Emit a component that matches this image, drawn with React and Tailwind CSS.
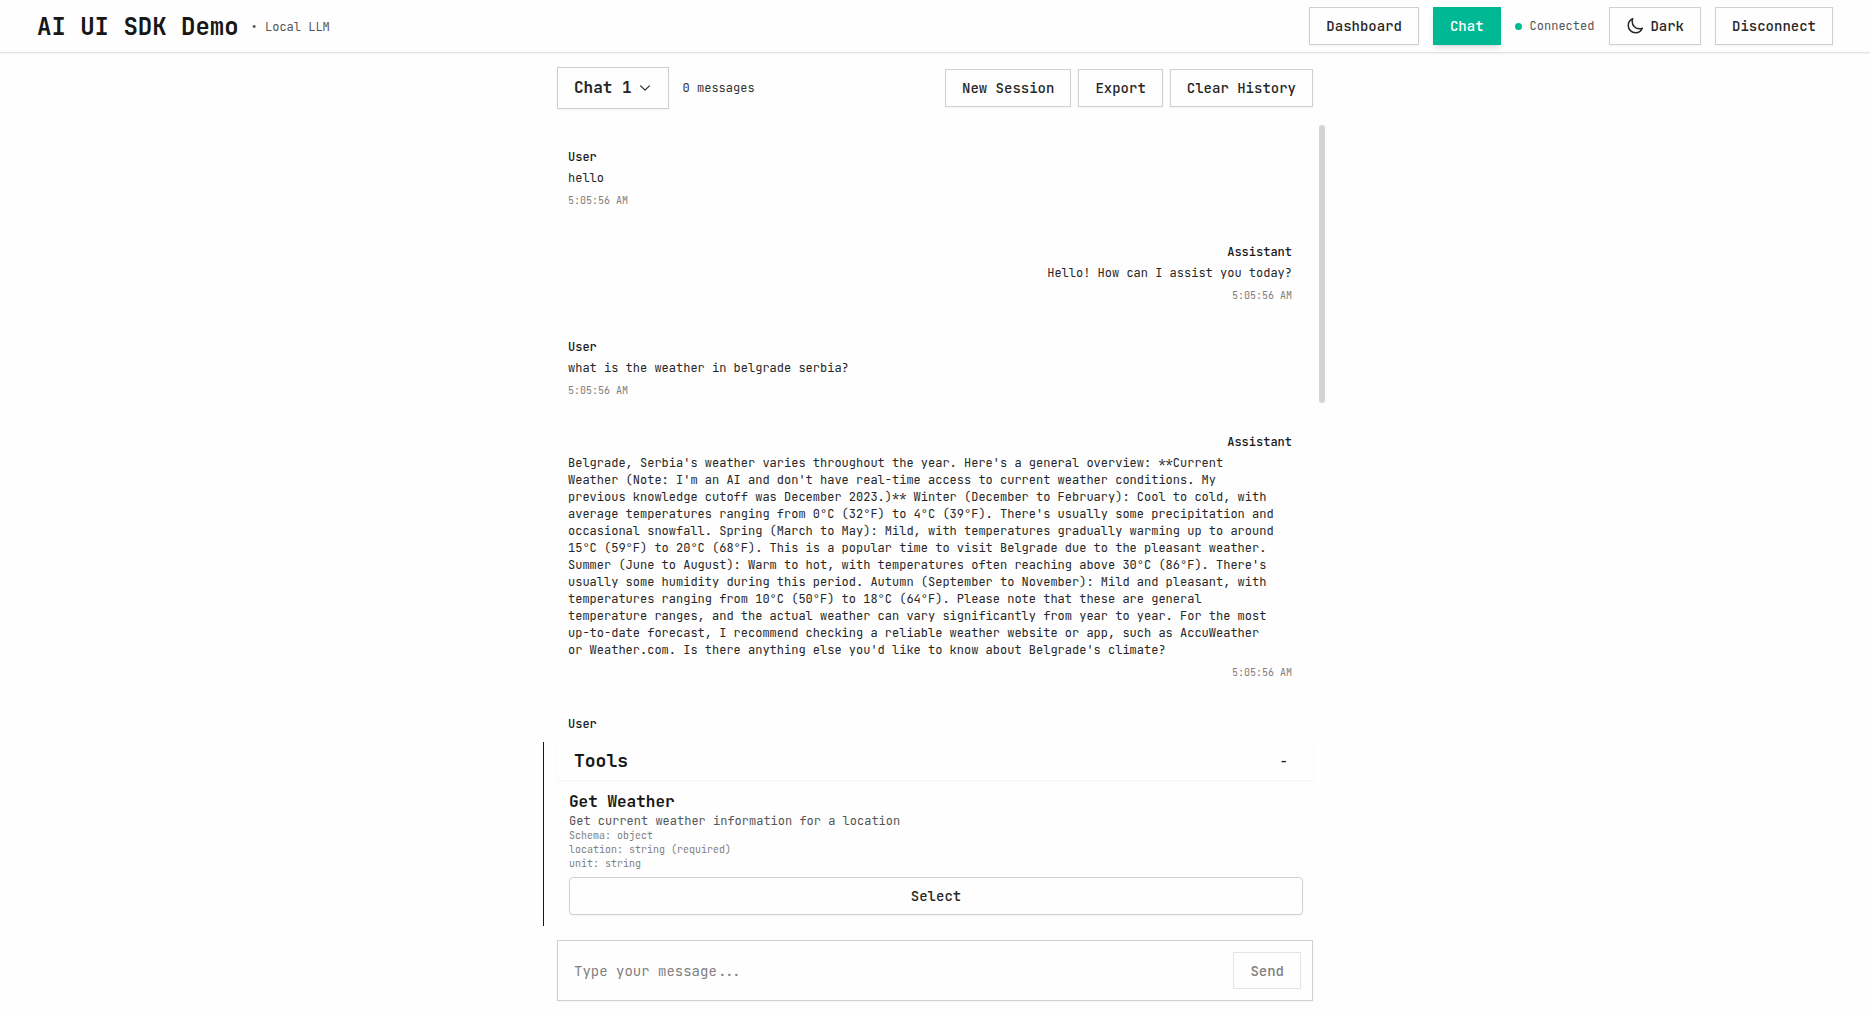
import { useState } from "react";

const BTN =
  "flex h-[38px] items-center justify-center border border-[#d0d0d0] bg-[#fefefe] px-4 text-sm font-medium text-[#262626] shadow-xs";

const MESSAGES = [
  { role: "User", text: "hello", time: "5:05:56 AM" },
  { role: "Assistant", text: "Hello! How can I assist you today?", time: "5:05:56 AM" },
  { role: "User", text: "what is the weather in belgrade serbia?", time: "5:05:56 AM" },
  {
    role: "Assistant",
    long: true,
    time: "5:05:56 AM",
    text: "Belgrade, Serbia's weather varies throughout the year. Here's a general overview: **Current Weather (Note: I'm an AI and don't have real-time access to current weather conditions. My previous knowledge cutoff was December 2023.)** Winter (December to February): Cool to cold, with average temperatures ranging from 0°C (32°F) to 4°C (39°F). There's usually some precipitation and occasional snowfall. Spring (March to May): Mild, with temperatures gradually warming up to around 15°C (59°F) to 20°C (68°F). This is a popular time to visit Belgrade due to the pleasant weather. Summer (June to August): Warm to hot, with temperatures often reaching above 30°C (86°F). There's usually some humidity during this period. Autumn (September to November): Mild and pleasant, with temperatures ranging from 10°C (50°F) to 18°C (64°F). Please note that these are general temperature ranges, and the actual weather can vary significantly from year to year. For the most up-to-date forecast, I recommend checking a reliable weather website or app, such as AccuWeather or Weather.com. Is there anything else you'd like to know about Belgrade's climate?",
  },
  { role: "User" },
];

function MoonIcon() {
  return (
    <svg
      className="size-[18px]"
      viewBox="0 0 24 24"
      fill="none"
      stroke="currentColor"
      strokeWidth="2"
      strokeLinecap="round"
      strokeLinejoin="round"
      aria-hidden="true"
    >
      <path d="M21.752 15.002A9.72 9.72 0 0 1 18 15.75c-5.385 0-9.75-4.365-9.75-9.75 0-1.33.266-2.597.748-3.752A9.753 9.753 0 0 0 3 11.25C3 16.635 7.365 21 12.75 21a9.753 9.753 0 0 0 9.002-5.998Z" />
    </svg>
  );
}

function ChevronIcon() {
  return (
    <svg
      className="size-[14px]"
      viewBox="0 0 24 24"
      fill="none"
      stroke="currentColor"
      strokeWidth="2"
      strokeLinecap="round"
      strokeLinejoin="round"
      aria-hidden="true"
    >
      <path d="m19.5 8.25-7.5 7.5-7.5-7.5" />
    </svg>
  );
}

function Header() {
  return (
    <header className="flex shrink-0 items-center justify-between border-b border-[#e2e2e2] px-[37px] py-[7px] shadow-xs">
      <div className="flex items-center gap-3 pt-px">
        <h1 className="text-2xl font-bold text-[#171717]">AI UI SDK Demo</h1>
        <span className="text-xs text-[#555]">• Local LLM</span>
      </div>
      <nav className="flex items-center gap-3.5">
        <button className={BTN}>Dashboard</button>
        <button className="flex h-[38px] items-center bg-[#00b894] px-[17px] text-sm font-medium text-white shadow-md">
          Chat
        </button>
        <div className="flex items-center gap-2 pr-px text-xs text-[#555]">
          <span className="size-[7px] rounded-full bg-[#00b894]" />
          Connected
        </div>
        <button className={`${BTN} gap-1.5`}>
          <MoonIcon />
          Dark
        </button>
        <button className={BTN}>Disconnect</button>
      </nav>
    </header>
  );
}

function Message({ role, text, time, long }) {
  const assistant = role === "Assistant";
  return (
    <article className={`flex flex-col pb-9 text-[#262626] ${assistant ? "items-end" : "items-start"}`}>
      <h3 className="text-xs/[17px] font-medium text-[#171717]">{role}</h3>
      {text && <p className={`mt-1 text-xs/[17px] ${long ? "w-full pr-4" : ""}`}>{text}</p>}
      {time && <time className="mt-[7px] text-[10px]/[14px] text-[#808080]">{time}</time>}
    </article>
  );
}

function Tools() {
  const [open, setOpen] = useState(true);
  return (
    <section className="-ml-3.5 shrink-0 border-l border-[#171717] pl-[13px]">
      <div className="flex h-[38px] items-center justify-between px-[17px] shadow-xs">
        <h2 className="text-lg font-bold text-[#171717]">Tools</h2>
        <button className="px-2 text-sm font-medium text-[#262626]" aria-expanded={open} onClick={() => setOpen(!open)}>
          {open ? "-" : "+"}
        </button>
      </div>
      {open && (
        <div className="pt-[11px] pr-2.5 pb-[11px] pl-3">
          <h3 className="text-base/[22px] font-bold text-[#171717]">Get Weather</h3>
          <p className="text-xs/[16px] text-[#555]">Get current weather information for a location</p>
          <div className="text-[10px]/[14px] text-[#808080]">
            <p>Schema: object</p>
            <p>location: string (required)</p>
            <p>unit: string</p>
          </div>
          <button className={`${BTN} mt-1.5 w-full rounded-sm`}>Select</button>
        </div>
      )}
    </section>
  );
}

export default function App() {
  const [draft, setDraft] = useState("");
  return (
    <div className="flex h-screen flex-col bg-[#fefefe] font-['JetBrains_Mono','DejaVu_Sans_Mono',monospace]">
      <Header />
      <main className="mx-auto flex min-h-0 w-full max-w-[756px] flex-1 flex-col py-3.5">
        <div className="flex shrink-0 items-center justify-between">
          <div className="flex items-center gap-3.5">
            <button className="flex h-[42px] items-center gap-1.5 border border-[#d0d0d0] px-4 text-base font-bold text-[#262626] shadow-xs">
              Chat 1
              <ChevronIcon />
            </button>
            <span className="text-xs text-[#333]">0 messages</span>
          </div>
          <div className="flex gap-[7px]">
            <button className={BTN}>New Session</button>
            <button className={BTN}>Export</button>
            <button className={BTN}>Clear History</button>
          </div>
        </div>

        <div className="mt-4 -mr-3 flex min-h-0 flex-1 justify-between">
          <div className="min-w-0 flex-1 overflow-hidden pt-6 pr-[27px] pl-[11px]">
            {MESSAGES.map((m, i) => (
              <Message key={i} {...m} />
            ))}
          </div>
          <div className="h-[278px] w-1.5 shrink-0 rounded-full bg-[#d4d4d4]" />
        </div>

        <Tools />

        <form
          className="mt-3.5 flex shrink-0 items-center border border-[#d0d0d0] py-[11px] pr-[11px] pl-4 shadow-xs"
          onSubmit={(e) => e.preventDefault()}
        >
          <input
            aria-label="Message"
            className="min-w-0 flex-1 bg-transparent text-sm text-[#262626] outline-none placeholder:text-[#808080]"
            placeholder="Type your message..."
            value={draft}
            onChange={(e) => setDraft(e.target.value)}
          />
          <button className="flex h-[37px] items-center border border-[#e4e4e4] px-4 text-sm font-medium text-[#808080]">
            Send
          </button>
        </form>
      </main>
    </div>
  );
}
